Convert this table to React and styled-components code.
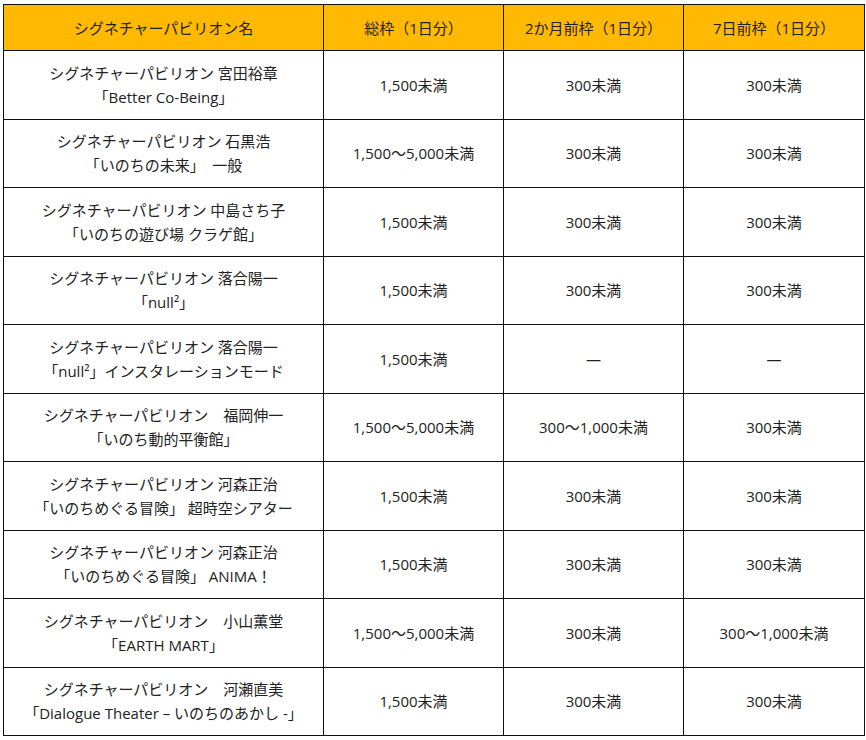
import React from 'react'
import styled, { createGlobalStyle } from 'styled-components'

const GlobalStyle = createGlobalStyle`
body{
  margin:0;
  padding:4px 3px;
  background:#fff;
}
`

const Table = styled.table`
width:861px;
border-collapse:collapse;
table-layout:fixed;
font-family:"Open Sans","Noto Sans CJK JP",sans-serif;
font-size:15px;
line-height:24px;
color:#222;
`

const Col = styled.col`
width:${props => props.w}px;
`

const Head = styled.th`
background-color:#ffb900;
font-weight:400;
text-align:center;
padding:10.5px 0;
border:1px solid #111;
`

const Cell = styled.td`
text-align:center;
vertical-align:middle;
padding:9.75px 0;
border:1px solid #111;
white-space:nowrap;
`

const rows = [
  ['シグネチャーパビリオン 宮田裕章', '「Better Co-Being」', '1,500未満', '300未満', '300未満'],
  ['シグネチャーパビリオン 石黒浩', '「いのちの未来」　一般', '1,500～5,000未満', '300未満', '300未満'],
  ['シグネチャーパビリオン 中島さち子', '「いのちの遊び場 クラゲ館」', '1,500未満', '300未満', '300未満'],
  ['シグネチャーパビリオン 落合陽一', '「null²」', '1,500未満', '300未満', '300未満'],
  ['シグネチャーパビリオン 落合陽一', '「null²」インスタレーションモード', '1,500未満', '―', '―'],
  ['シグネチャーパビリオン　福岡伸一', '「いのち動的平衡館」', '1,500～5,000未満', '300～1,000未満', '300未満'],
  ['シグネチャーパビリオン 河森正治', '「いのちめぐる冒険」 超時空シアター', '1,500未満', '300未満', '300未満'],
  ['シグネチャーパビリオン 河森正治', '「いのちめぐる冒険」 ANIMA！', '1,500未満', '300未満', '300未満'],
  ['シグネチャーパビリオン　小山薫堂', '「EARTH MART」', '1,500～5,000未満', '300未満', '300～1,000未満'],
  ['シグネチャーパビリオン　河瀬直美', '「Dialogue Theater – いのちのあかし -」', '1,500未満', '300未満', '300未満'],
]

const App = () => {
  return (
    <>
      <GlobalStyle />
      <Table>
        <colgroup>
          <Col w={320} />
          <Col w={180} />
          <Col w={180} />
          <Col w={181} />
        </colgroup>
        <thead>
          <tr>
            <Head>シグネチャーパビリオン名</Head>
            <Head>総枠（1日分）</Head>
            <Head>2か月前枠（1日分）</Head>
            <Head>7日前枠（1日分）</Head>
          </tr>
        </thead>
        <tbody>
          {rows.map((r, i) => (
            <tr key={i}>
              <Cell>{r[0]}<br />{r[1]}</Cell>
              <Cell>{r[2]}</Cell>
              <Cell>{r[3]}</Cell>
              <Cell>{r[4]}</Cell>
            </tr>
          ))}
        </tbody>
      </Table>
    </>
  )
}

export default App
